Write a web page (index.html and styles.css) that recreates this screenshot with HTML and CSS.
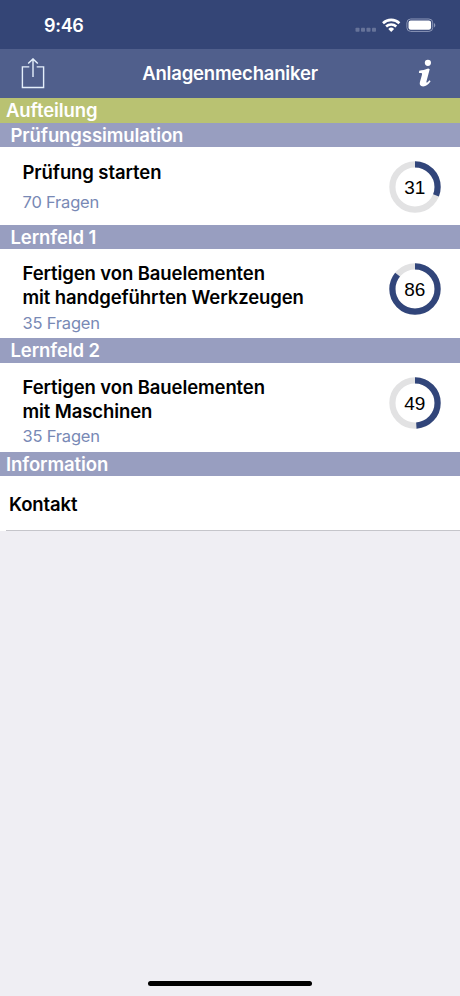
FILE: index.html
```html
<!DOCTYPE html>
<html lang="de">
<head>
    <meta charset="utf-8">
    <title>Anlagenmechaniker</title>
    <link rel="stylesheet" href="styles.css">
</head>
<body>
    <div class="statusbar">
        <span class="uhrzeit">9:46</span>
        <svg class="status-icons" width="82" height="16" viewBox="0 0 82 16">
            <g fill="#667399">
                <rect x="0.5" y="10.8" width="4" height="4" rx="0.8"/>
                <rect x="6" y="10.8" width="4" height="4" rx="0.8"/>
                <rect x="11.5" y="10.8" width="4" height="4" rx="0.8"/>
                <rect x="17" y="10.8" width="4" height="4" rx="0.8"/>
            </g>
            <g fill="none" stroke="#fff" stroke-width="2.6">
                <path d="M28 6.2a11.8 11.8 0 0 1 16.4 0"/>
                <path d="M31.1 9.5a7.4 7.4 0 0 1 10.2 0"/>
            </g>
            <path d="M33.3 11.9a4.2 4.2 0 0 1 5.8 0l-2.9 3z" fill="#fff"/>
            <rect x="51.9" y="2" width="25.8" height="12.4" rx="3.8" fill="none" stroke="#8d98b9"/>
            <rect x="53.5" y="3.6" width="22.6" height="9.2" rx="2.2" fill="#fff"/>
            <path d="M79 6c1.8.7 1.8 3.7 0 4.4z" fill="#8d98b9"/>
        </svg>
    </div>
    <div class="navbar">
        <svg class="teilen" width="24" height="32" viewBox="0 0 24 32" fill="none" stroke="#e4effb" stroke-width="1.4">
            <path d="M8.3 8.9H1.4v20.6h21.2V8.9h-6.9"/>
            <path d="M12 19V1.2M7.2 5.6L12 .9l4.8 4.7"/>
        </svg>
        <h1>Anlagenmechaniker</h1>
        <svg class="info" width="16" height="28" viewBox="0 0 16 28" fill="#fff">
            <circle cx="10.9" cy="3.8" r="3.1"/>
            <path d="M2.2 11.7c3.2-.2 6-.9 9-2.1l1.5.6-3.2 12c-.4 1.5.2 1.8 1.3.8l1.7-1.7 1.1.9c-2.2 3.2-4.6 5.2-7.5 5.2-2.9 0-3.8-1.9-3.1-4.6l1.9-6.9c.4-1.5.1-2-1.2-2H1.9z"/>
        </svg>
    </div>
    <h2 class="abschnitt aufteilung">Aufteilung</h2>
    <h2 class="abschnitt eingerueckt">Prüfungssimulation</h2>
    <div class="zeile start">
        <div class="text">
            <h3>Prüfung starten</h3>
            <p>70 Fragen</p>
        </div>
        <svg class="ring" width="52" height="52" viewBox="0 0 52 52">
            <circle class="spur" cx="26" cy="26" r="22.6"/>
            <circle class="wert" cx="26" cy="26" r="22.6" pathLength="100" stroke-dasharray="31 100"/>
            <text x="25.7" y="32.5">31</text>
        </svg>
    </div>
    <h2 class="abschnitt eingerueckt">Lernfeld 1</h2>
    <div class="zeile">
        <div class="text">
            <h3>Fertigen von Bauelementen<br>mit handgeführten Werkzeugen</h3>
            <p>35 Fragen</p>
        </div>
        <svg class="ring" width="52" height="52" viewBox="0 0 52 52">
            <circle class="spur" cx="26" cy="26" r="22.6"/>
            <circle class="wert" cx="26" cy="26" r="22.6" pathLength="100" stroke-dasharray="86 100"/>
            <text x="25.7" y="32.5">86</text>
        </svg>
    </div>
    <h2 class="abschnitt eingerueckt">Lernfeld 2</h2>
    <div class="zeile">
        <div class="text">
            <h3>Fertigen von Bauelementen<br>mit Maschinen</h3>
            <p>35 Fragen</p>
        </div>
        <svg class="ring" width="52" height="52" viewBox="0 0 52 52">
            <circle class="spur" cx="26" cy="26" r="22.6"/>
            <circle class="wert" cx="26" cy="26" r="22.6" pathLength="100" stroke-dasharray="49 100"/>
            <text x="25.7" y="32.5">49</text>
        </svg>
    </div>
    <h2 class="abschnitt">Information</h2>
    <div class="kontakt"><h3>Kontakt</h3></div>
    <div class="home"></div>
</body>
</html>
```

FILE: styles.css
```css
* {
    box-sizing: border-box;
}
body {
    display: flex;
    flex-direction: column;
    height: 996px;
    margin: 0;
    background-color: #efeef3;
    font-family: Inter, "Liberation Sans", sans-serif;
}
h1, h2, h3, p {
    margin: 0;
}
.statusbar {
    display: flex;
    justify-content: space-between;
    height: 49px;
    padding: 17px 23px 0 44px;
    background-color: #344576;
    color: white;
}
.uhrzeit {
    font-size: 18px;
    font-weight: 600;
    line-height: 18px;
    letter-spacing: -0.3px;
}
.navbar {
    display: flex;
    justify-content: space-between;
    height: 49px;
    padding: 9px 27px 0 21px;
    background-color: #505f8c;
    color: white;
}
.navbar h1 {
    padding-right: 2px;
    font-size: 18.5px;
    font-weight: 600;
    line-height: 31px;
    letter-spacing: -0.2px;
}
.info {
    margin-top: 1px;
}
.abschnitt {
    height: 24.5px;
    padding-left: 6px;
    background-color: #989ec0;
    color: white;
    font-size: 18.5px;
    font-weight: 600;
    line-height: 25px;
    letter-spacing: -0.1px;
}
.aufteilung {
    background-color: #b9c272;
}
.eingerueckt {
    padding-left: 10.5px;
}
.zeile {
    display: flex;
    justify-content: space-between;
    height: 89px;
    padding: 12px 19px 0 22.5px;
    background-color: white;
}
.start {
    height: 77.5px;
}
h3 {
    font-size: 18.5px;
    font-weight: 600;
    line-height: 24.3px;
    letter-spacing: -0.1px;
}
.zeile p {
    color: #7889b5;
    font-size: 16.5px;
    line-height: 26px;
    letter-spacing: -0.2px;
}
.start h3 {
    padding-top: 0.7px;
}
.start p {
    margin-top: 5px;
}
.ring {
    margin-top: 2px;
}
.ring circle {
    fill: none;
    stroke-width: 6.2;
}
.ring .spur {
    stroke: #e2e2e3;
}
.ring .wert {
    stroke: #31457a;
    transform: rotate(-90deg);
    transform-origin: center;
}
.ring text {
    font-family: "Liberation Sans", sans-serif;
    font-size: 19px;
    text-anchor: middle;
}
.kontakt {
    height: 55px;
    padding: 15.5px 0 0 9px;
    background-color: white;
}
.kontakt::after {
    content: "";
    display: block;
    height: 1px;
    margin: 14.2px 0 0 -3px;
    background-color: #c5c5ca;
}
.home {
    width: 164px;
    height: 5px;
    margin: auto auto 10px 148px;
    border-radius: 3px;
    background-color: black;
}
```
